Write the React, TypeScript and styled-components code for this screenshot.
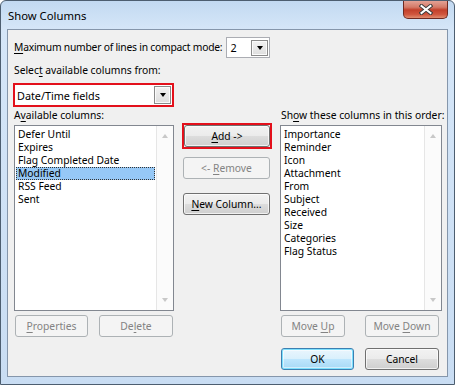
import React from "react";
import styled, {createGlobalStyle, css} from "styled-components";

const GlobalStyle = createGlobalStyle`
	html, body {
		margin: 0;
		padding: 0;
		background: #ffffff;
	}
	body {
		font-family: "Noto Sans", "Open Sans", sans-serif;
		font-size: 10.3px;
		color: #000;
	}
`;

const Window = styled.div`
	box-sizing: border-box;
	width: 455px;
	height: 385px;
	border: 1px solid #4d5e70;
	border-radius: 6px 6px 0 0;
	background: linear-gradient(180deg, #c2d9f1 0px, #d5e6f8 28px, #c9ddf3 100%);
	display: flex;
	flex-direction: column;
	overflow: hidden;
`;

const TitleBar = styled.div`
	height: 28px;
	display: flex;
	align-items: flex-start;
`;

const Title = styled.div`
	padding: 7px 0 0 7px;
	line-height: 15px;
	font-size: 11.3px;
	flex: 1;
`;

const CloseButton = styled.div`
	box-sizing: border-box;
	width: 45px;
	height: 19px;
	margin: -1px 6px 0 0;
	border: 1px solid #6e2a22;
	border-top: none;
	border-radius: 0 0 5px 5px;
	background: linear-gradient(180deg, #e6a89c 0%, #d47a68 40%, #c2402b 55%, #d0563e 80%, #e08c6f 100%);
	display: flex;
	align-items: center;
	justify-content: center;
`;

const Client = styled.div`
	box-sizing: border-box;
	height: 348px;
	margin: 0 6px;
	border: 1px solid #8596ab;
	background: #f0f0f0;
	padding: 0 0 0 6px;
	display: flex;
	flex-direction: column;
`;

const Row = styled.div<{$top: number}>`
	display: flex;
	align-items: center;
	margin-top: ${(p) => p.$top}px;
`;

const Label = styled.span<{$indent?: number; $tight?: boolean}>`
	line-height: 15px;
	white-space: nowrap;
	padding-left: ${(p) => p.$indent || 0}px;
	letter-spacing: ${(p) => (p.$tight ? "-0.22px" : "normal")};
`;

const Key = styled.span`
	text-decoration: underline;
	text-underline-offset: 2px;
`;

const Combo = styled.div`
	box-sizing: border-box;
	width: 44px;
	height: 21px;
	margin-left: 4px;
	border: 1px solid #abadb3;
	background: #fff;
	display: flex;
	align-items: center;
	padding: 0 1px 0 3px;
`;

const ComboText = styled.span`
	flex: 1;
	line-height: 15px;
	font-size: 10.8px;
`;

const DropButton = styled.div<{$h: number}>`
	box-sizing: border-box;
	width: 17px;
	height: ${(p) => p.$h}px;
	border: 1px solid #8a8a8a;
	background: linear-gradient(180deg, #f2f2f2, #dedede);
	box-shadow: inset 0 0 0 1px #fbfbfb;
	display: flex;
	align-items: center;
	justify-content: center;
`;

const Arrow = styled.span<{$color?: string; $up?: boolean}>`
	width: 0;
	height: 0;
	border-left: 3.5px solid transparent;
	border-right: 3.5px solid transparent;
	${(p) =>
		p.$up
			? css`border-bottom: 4px solid ${p.$color || "#000"};`
			: css`border-top: 4px solid ${p.$color || "#000"};`}
`;

const RedFrame = styled.div<{$w: number; $h: number}>`
	box-sizing: border-box;
	width: ${(p) => p.$w}px;
	height: ${(p) => p.$h}px;
	border: 2px solid #e3101b;
	display: flex;
	align-items: center;
	justify-content: center;
`;

const SourceCombo = styled(RedFrame)`
	margin-left: -1px;
	background: #fff;
	justify-content: flex-start;
	padding: 0 1px 0 2px;
`;

const Columns = styled.div`
	display: grid;
	grid-template-columns: 160px 90px 162px;
	grid-template-rows: 15px 186px;
	column-gap: 8px;
	row-gap: 2px;
	margin-top: 1px;
`;

const MiddleCol = styled.div`
	grid-column: 2;
	grid-row: 1 / span 2;
	display: flex;
	flex-direction: column;
	padding-top: 15px;
`;

const ListBox = styled.div`
	box-sizing: border-box;
	border: 1px solid #828790;
	background: #fff;
	display: flex;
	min-width: 0;
`;

const Items = styled.div`
	flex: 1;
	padding-top: 2px;
	display: flex;
	flex-direction: column;
	min-width: 0;
`;

const Item = styled.div<{$selected?: boolean}>`
	box-sizing: border-box;
	height: 13px;
	line-height: 11px;
	margin: 0 1px;
	padding-left: 1px;
	white-space: nowrap;
	border: 1px dotted transparent;
	${(p) =>
		p.$selected &&
		css`
			background: #96c8f6;
			border-color: #333;
		`}
`;

const ScrollBar = styled.div`
	width: 17px;
	flex-shrink: 0;
	box-sizing: border-box;
	border-left: 1px solid #e6e6e6;
	background: #fbfbfb;
	display: flex;
	flex-direction: column;
	justify-content: space-between;
	align-items: center;
	padding: 8px 0 8px;
`;

const Button = styled.div<{$w: number; $disabled?: boolean; $default?: boolean; $ml?: number; $mt?: number}>`
	box-sizing: border-box;
	width: ${(p) => p.$w}px;
	height: 22px;
	margin-left: ${(p) => p.$ml || 0}px;
	margin-top: ${(p) => p.$mt || 0}px;
	border: 1px solid #707070;
	border-radius: 3px;
	background: linear-gradient(180deg, #f2f2f2 0%, #ebebeb 50%, #dddddd 51%, #cfcfcf 100%);
	box-shadow: inset 0 0 0 1px rgba(255, 255, 255, 0.7);
	display: flex;
	align-items: center;
	justify-content: center;
	flex-shrink: 0;
	${(p) =>
		p.$disabled &&
		css`
			border-color: #adb2b5;
			background: #f4f4f4;
			box-shadow: none;
			color: #838383;
		`}
	${(p) =>
		p.$default &&
		css`
			border-color: #3c7fb1;
			background: linear-gradient(180deg, #eaf6fd 0%, #d9f0fc 50%, #bee6fd 51%, #a7d9f5 100%);
			box-shadow: inset 0 0 0 1px #7ee0fd, inset 0 0 0 2px rgba(255, 255, 255, 0.5);
		`}
`;

const Caption = styled.span`
	line-height: 15px;
	white-space: pre;
`;

const ButtonRow = styled.div<{$top: number}>`
	display: grid;
	grid-template-columns: 160px 90px 162px;
	column-gap: 8px;
	margin-top: ${(p) => p.$top}px;
`;

const ButtonGroup = styled.div<{$col: number}>`
	grid-column: ${(p) => p.$col};
	display: flex;
	padding-left: 1px;
`;

const available = ["Defer Until", "Expires", "Flag Completed Date", "Modified", "RSS Feed", "Sent"];
const shown = [
	"Importance",
	"Reminder",
	"Icon",
	"Attachment",
	"From",
	"Subject",
	"Received",
	"Size",
	"Categories",
	"Flag Status",
];

const List: React.FC<{items: string[]; selected?: string}> = ({items, selected}) => (
	<ListBox>
		<Items>
			{items.map((it) => (
				<Item key={it} $selected={it === selected}>
					{it}
				</Item>
			))}
		</Items>
		<ScrollBar>
			<Arrow $up $color="#c8c8c8" />
			<Arrow $color="#c8c8c8" />
		</ScrollBar>
	</ListBox>
);

export default function App() {
	return (
		<>
			<GlobalStyle />
			<Window>
				<TitleBar>
					<Title>Show Columns</Title>
					<CloseButton>
						<svg width="14" height="11" viewBox="0 0 14 11">
							<path d="M2.5 2 L11.5 9 M11.5 2 L2.5 9" stroke="#3a3a3a" strokeWidth="4" strokeLinecap="square" />
							<path d="M2.5 2 L11.5 9 M11.5 2 L2.5 9" stroke="#ffffff" strokeWidth="2" strokeLinecap="square" />
						</svg>
					</CloseButton>
				</TitleBar>
				<Client>
					<Row $top={7}>
						<Label $tight>
							<Key>M</Key>aximum number of lines in compact mode:
						</Label>
						<Combo>
							<ComboText>2</ComboText>
							<DropButton $h={16}>
								<Arrow />
							</DropButton>
						</Combo>
					</Row>
					<Row $top={5}>
						<Label>
							Selec<Key>t</Key> available columns from:
						</Label>
					</Row>
					<Row $top={5}>
						<SourceCombo $w={161} $h={24}>
							<ComboText>Date/Time fields</ComboText>
							<DropButton $h={18}>
								<Arrow />
							</DropButton>
						</SourceCombo>
					</Row>
					<Columns>
						<Label>
							A<Key>v</Key>ailable columns:
						</Label>
						<MiddleCol>
							<RedFrame $w={90} $h={26}>
								<Button $w={86}>
									<Caption>
										<Key>A</Key>dd -&gt;
									</Caption>
								</Button>
							</RedFrame>
							<Button $w={87} $ml={1} $mt={8} $disabled>
								<Caption>
									&lt;- <Key>R</Key>emove
								</Caption>
							</Button>
							<Button $w={87} $ml={1} $mt={14}>
								<Caption>
									<Key>N</Key>ew Column...
								</Caption>
							</Button>
						</MiddleCol>
						<Label $indent={1}>
							Sh<Key>o</Key>w these columns in this order:
						</Label>
						<List items={available} selected="Modified" />
						<List items={shown} />
					</Columns>
					<ButtonRow $top={4}>
						<ButtonGroup $col={1}>
							<Button $w={73} $disabled>
								<Caption>
									<Key>P</Key>roperties
								</Caption>
							</Button>
							<Button $w={74} $ml={11} $disabled>
								<Caption>
									De<Key>l</Key>ete
								</Caption>
							</Button>
						</ButtonGroup>
						<ButtonGroup $col={3}>
							<Button $w={64} $disabled>
								<Caption>
									Move <Key>U</Key>p
								</Caption>
							</Button>
							<Button $w={74} $ml={20} $disabled>
								<Caption>
									Move <Key>D</Key>own
								</Caption>
							</Button>
						</ButtonGroup>
					</ButtonRow>
					<ButtonRow $top={11}>
						<ButtonGroup $col={3}>
							<Button $w={73} $default>
								<Caption>OK</Caption>
							</Button>
							<Button $w={74} $ml={11}>
								<Caption>Cancel</Caption>
							</Button>
						</ButtonGroup>
					</ButtonRow>
				</Client>
			</Window>
		</>
	);
}
